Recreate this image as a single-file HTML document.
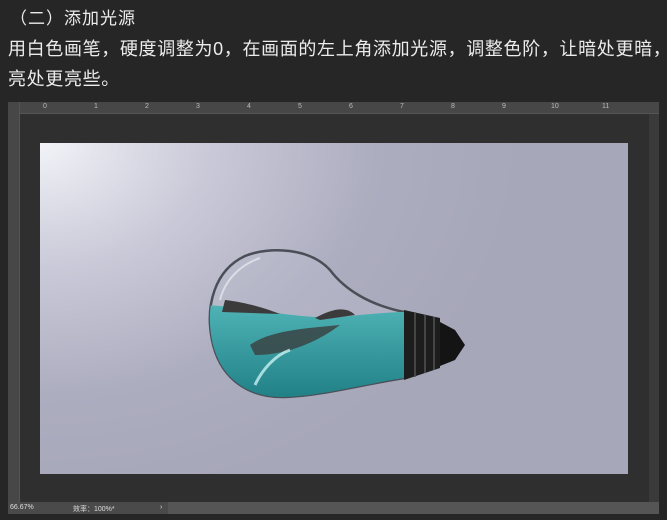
<!DOCTYPE html>
<html><head><meta charset="utf-8"><style>
*{margin:0;padding:0;box-sizing:border-box}
body{width:667px;height:520px;background:#262626;position:relative;overflow:hidden;font-family:"Liberation Sans","Noto Sans CJK SC",sans-serif;color:#ececec}
.t1{position:absolute;left:10px;top:4px;font-size:17px;letter-spacing:1px}
.t2{position:absolute;left:8px;top:34px;font-size:18px;line-height:30px;width:700px;letter-spacing:0.65px;white-space:nowrap}
.frame{position:absolute;left:8px;top:102px;width:651px;height:412px;background:#2f2f2f}
.rt{position:absolute;left:0;top:0;width:651px;height:12px;background:#474747;border-bottom:1px solid #555;font-size:7px;color:#bbb}
.rt span{position:absolute;top:1px}
.rl{position:absolute;left:0;top:0;width:12px;height:400px;background:#474747;border-right:1px solid #555}
.rs{position:absolute;right:0;top:12px;width:10px;height:388px;background:#3a3a3a}
.img{position:absolute;left:32px;top:41px;width:588px;height:331px;background:radial-gradient(ellipse 480px 360px at 0% 0%,#f2f2f8 0%,#c9c9d8 35%,#adadc0 70%,#a7a7ba 100%)}
.sb{position:absolute;left:0;top:400px;width:651px;height:12px;background:#4a4a4a;font-size:7px;color:#ddd}
</style></head><body>
<div class="t1">（二）添加光源</div>
<div class="t2">用白色画笔，硬度调整为0，在画面的左上角添加光源，调整色阶，让暗处更暗，<br>亮处更亮些。</div>
<div class="frame">
 <div class="rt"><span style="left:35px">0</span><span style="left:86px">1</span><span style="left:137px">2</span><span style="left:188px">3</span><span style="left:239px">4</span><span style="left:290px">5</span><span style="left:341px">6</span><span style="left:392px">7</span><span style="left:443px">8</span><span style="left:494px">9</span><span style="left:543px">10</span><span style="left:594px">11</span></div>
 <div class="rl"></div>
 <div class="rs"></div>
 <div class="img"></div>
 <div class="sb"><span style="position:absolute;left:2px;top:2px">66.67%</span><span style="position:absolute;left:65px;top:2px">效率：100%*</span><span style="position:absolute;left:152px;top:2px">›</span><div style="position:absolute;left:160px;top:0;width:491px;height:12px;background:#555"></div></div>
</div>
<svg style="position:absolute;left:0;top:0" width="667" height="520">
 <defs>
  <clipPath id="g"><path d="M404,312 C370,305 345,290 330,270 C310,248 270,246 245,256 C215,270 205,305 212,340 C220,380 250,398 285,397 C320,396 360,385 404,378 Z"/></clipPath>
  <linearGradient id="w" x1="0" y1="0" x2="0" y2="1"><stop offset="0" stop-color="#4fb3b5"/><stop offset="1" stop-color="#1f7f85"/></linearGradient>
 </defs>
 <path d="M404,312 C370,305 345,290 330,270 C310,248 270,246 245,256 C215,270 205,305 212,340 C220,380 250,398 285,397 C320,396 360,385 404,378 Z" fill="#b9bccb" fill-opacity="0.4" stroke="#4a4e57" stroke-width="2.5"/>
 <g clip-path="url(#g)">
  <path d="M200,305 C240,305 300,320 340,317 C370,314 390,312 410,312 L410,400 L200,400 Z" fill="url(#w)"/>
  <path d="M225,300 C250,303 270,310 280,314 L222,312 Z" fill="#3b3b3b"/>
  <path d="M315,318 C330,310 345,305 355,315 L320,320 Z" fill="#3b3b3b"/>
  <path d="M250,345 C270,330 310,328 340,325 C320,340 290,355 255,355 Z" fill="#3a4444" opacity="0.85"/>
  <path d="M255,385 C262,370 275,355 290,350" stroke="#dff" stroke-width="3" fill="none" opacity="0.7"/>
  <path d="M220,300 C225,280 240,265 260,258" stroke="#fff" stroke-width="2" fill="none" opacity="0.5"/>
 </g>
 <path d="M404,310 L440,318 L440,368 L404,380 Z" fill="#1d1d1d"/>
 <g stroke="#555" stroke-width="1.5"><line x1="415" y1="313" x2="415" y2="377"/><line x1="425" y1="315" x2="425" y2="373"/><line x1="434" y1="317" x2="434" y2="370"/></g>
 <path d="M440,322 L455,330 L465,345 L455,360 L440,366 Z" fill="#141414"/>
</svg>
</body></html>
